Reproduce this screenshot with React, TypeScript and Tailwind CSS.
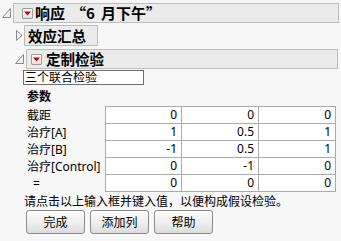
import React from "react";

const CJK = { fontFamily: '"Noto Sans", "Noto Sans CJK SC", sans-serif' };
const CJKT = { fontFamily: '"Noto Sans CJK SC", sans-serif' };

function OpenTri() {
  return (
    <svg width="9" height="10" viewBox="0 0 9 10" className="block">
      <polygon points="8.5,0.5 8.5,9.5 0.5,9.5" fill="#f0f0f0" stroke="#8a8a8a" strokeWidth="1" />
    </svg>
  );
}

function ClosedTri() {
  return (
    <svg width="7" height="11" viewBox="0 0 7 11" className="block">
      <polygon points="0.5,0.5 6,5.5 0.5,10.5" fill="#fbfbfb" stroke="#8a8a8a" strokeWidth="1" />
    </svg>
  );
}

function RedBtn() {
  return (
    <div className="w-[11px] h-[11px] border border-[#9c9c9c] rounded-[1px] bg-gradient-to-b from-[#ffffff] to-[#e2e2e2] flex items-center justify-center">
      <svg width="7" height="5" viewBox="0 0 7 5" className="block">
        <polygon points="0,0.5 7,0.5 3.5,4.5" fill="#d00000" />
      </svg>
    </div>
  );
}

const rows: { label: string; vals: string[]; pad?: boolean }[] = [
  { label: "截距", vals: ["0", "0", "0"] },
  { label: "治疗[A]", vals: ["1", "0.5", "1"] },
  { label: "治疗[B]", vals: ["-1", "0.5", "1"] },
  { label: "治疗[Control]", vals: ["0", "-1", "0"] },
  { label: "=", vals: ["0", "0", "0"], pad: true },
];

export default function App() {
  return (
    <div className="w-[341px] h-[241px] bg-[#f7f7f7] overflow-hidden text-black pt-[3px]" style={CJK}>
      {/* Header 1 */}
      <div className="flex items-center h-[20px]">
        <div className="w-[13px] pl-[2px] flex items-center">
          <OpenTri />
        </div>
        <div className="flex-1 mr-[2px] h-[20px] border border-[#bdbdbd] bg-[#ebebeb] flex items-center pl-[8px]">
          <RedBtn />
          <span className="ml-[2px] text-[15px] font-bold leading-[18px] whitespace-nowrap" style={CJKT}>
            响应<span className="ml-[6px]">“6</span>
            <span className="ml-[6px]">月下午”</span>
          </span>
        </div>
      </div>

      {/* Header 2 */}
      <div className="flex items-center h-[21px] mt-[2px]">
        <div className="w-[24px] pl-[16px] flex items-center">
          <ClosedTri />
        </div>
        <div className="w-[74px] h-[21px] border border-[#bdbdbd] bg-[#ebebeb] flex items-center pl-[3px]">
          <span className="text-[14.5px] font-bold leading-[18px]" style={CJKT}>
            效应汇总
          </span>
        </div>
      </div>

      {/* Header 3 */}
      <div className="flex items-center h-[20px] mt-[3px]">
        <div className="w-[26px] pl-[15px] flex items-center">
          <OpenTri />
        </div>
        <div className="w-[312px] h-[20px] border border-[#bdbdbd] bg-[#ebebeb] flex items-center pl-[4px]">
          <RedBtn />
          <span className="ml-[4px] text-[14.5px] font-bold leading-[18px]" style={CJKT}>
            定制检验
          </span>
        </div>
      </div>

      {/* Input */}
      <div className="ml-[23px] mt-[1px] w-[121px] h-[15px] border border-[#6e6e6e] bg-white flex items-center pl-[1px]">
        <span className="text-[12px] leading-[13px]">三个联合检验</span>
      </div>

      <div className="ml-[27px] mt-[4px] text-[12px] leading-[16px] font-bold">参数</div>

      {/* Table */}
      <div className="mt-[1px] flex flex-col">
        {rows.map((r, i) => (
          <div key={i} className="flex">
            <div
              className={`w-[105px] flex items-center text-[12px] leading-[16px] ${r.pad ? "pl-[33px]" : "pl-[27px]"} ${i === 0 ? "pt-[1px]" : ""}`}
            >
              {r.label}
            </div>
            {r.vals.map((v, j) => (
              <div
                key={j}
                className={`w-[77px] h-[17px] bg-white border-b border-r border-[#ababab] ${j === 0 ? "border-l" : ""} ${i === 0 ? "border-t h-[18px]" : ""} flex items-center justify-end pr-[4px] text-[12px] leading-[16px]`}
              >
                {v}
              </div>
            ))}
          </div>
        ))}
      </div>

      <div className="ml-[24px] mt-[1px] text-[12px] leading-[16px] whitespace-nowrap" style={CJKT}>
        请点击以上输入框并键入值，以便构成假设检验。
      </div>

      <div className="ml-[26px] mt-[1px] flex gap-[5px]">
        {["完成", "添加列", "帮助"].map((b) => (
          <div
            key={b}
            className="w-[59px] h-[24px] border border-[#8c8c8c] rounded-[3px] bg-gradient-to-b from-[#fdfdfd] via-[#f0f0f0] to-[#dcdcdc] flex items-center justify-center text-[12px] leading-[16px]"
            style={CJKT}
          >
            {b}
          </div>
        ))}
      </div>
    </div>
  );
}
